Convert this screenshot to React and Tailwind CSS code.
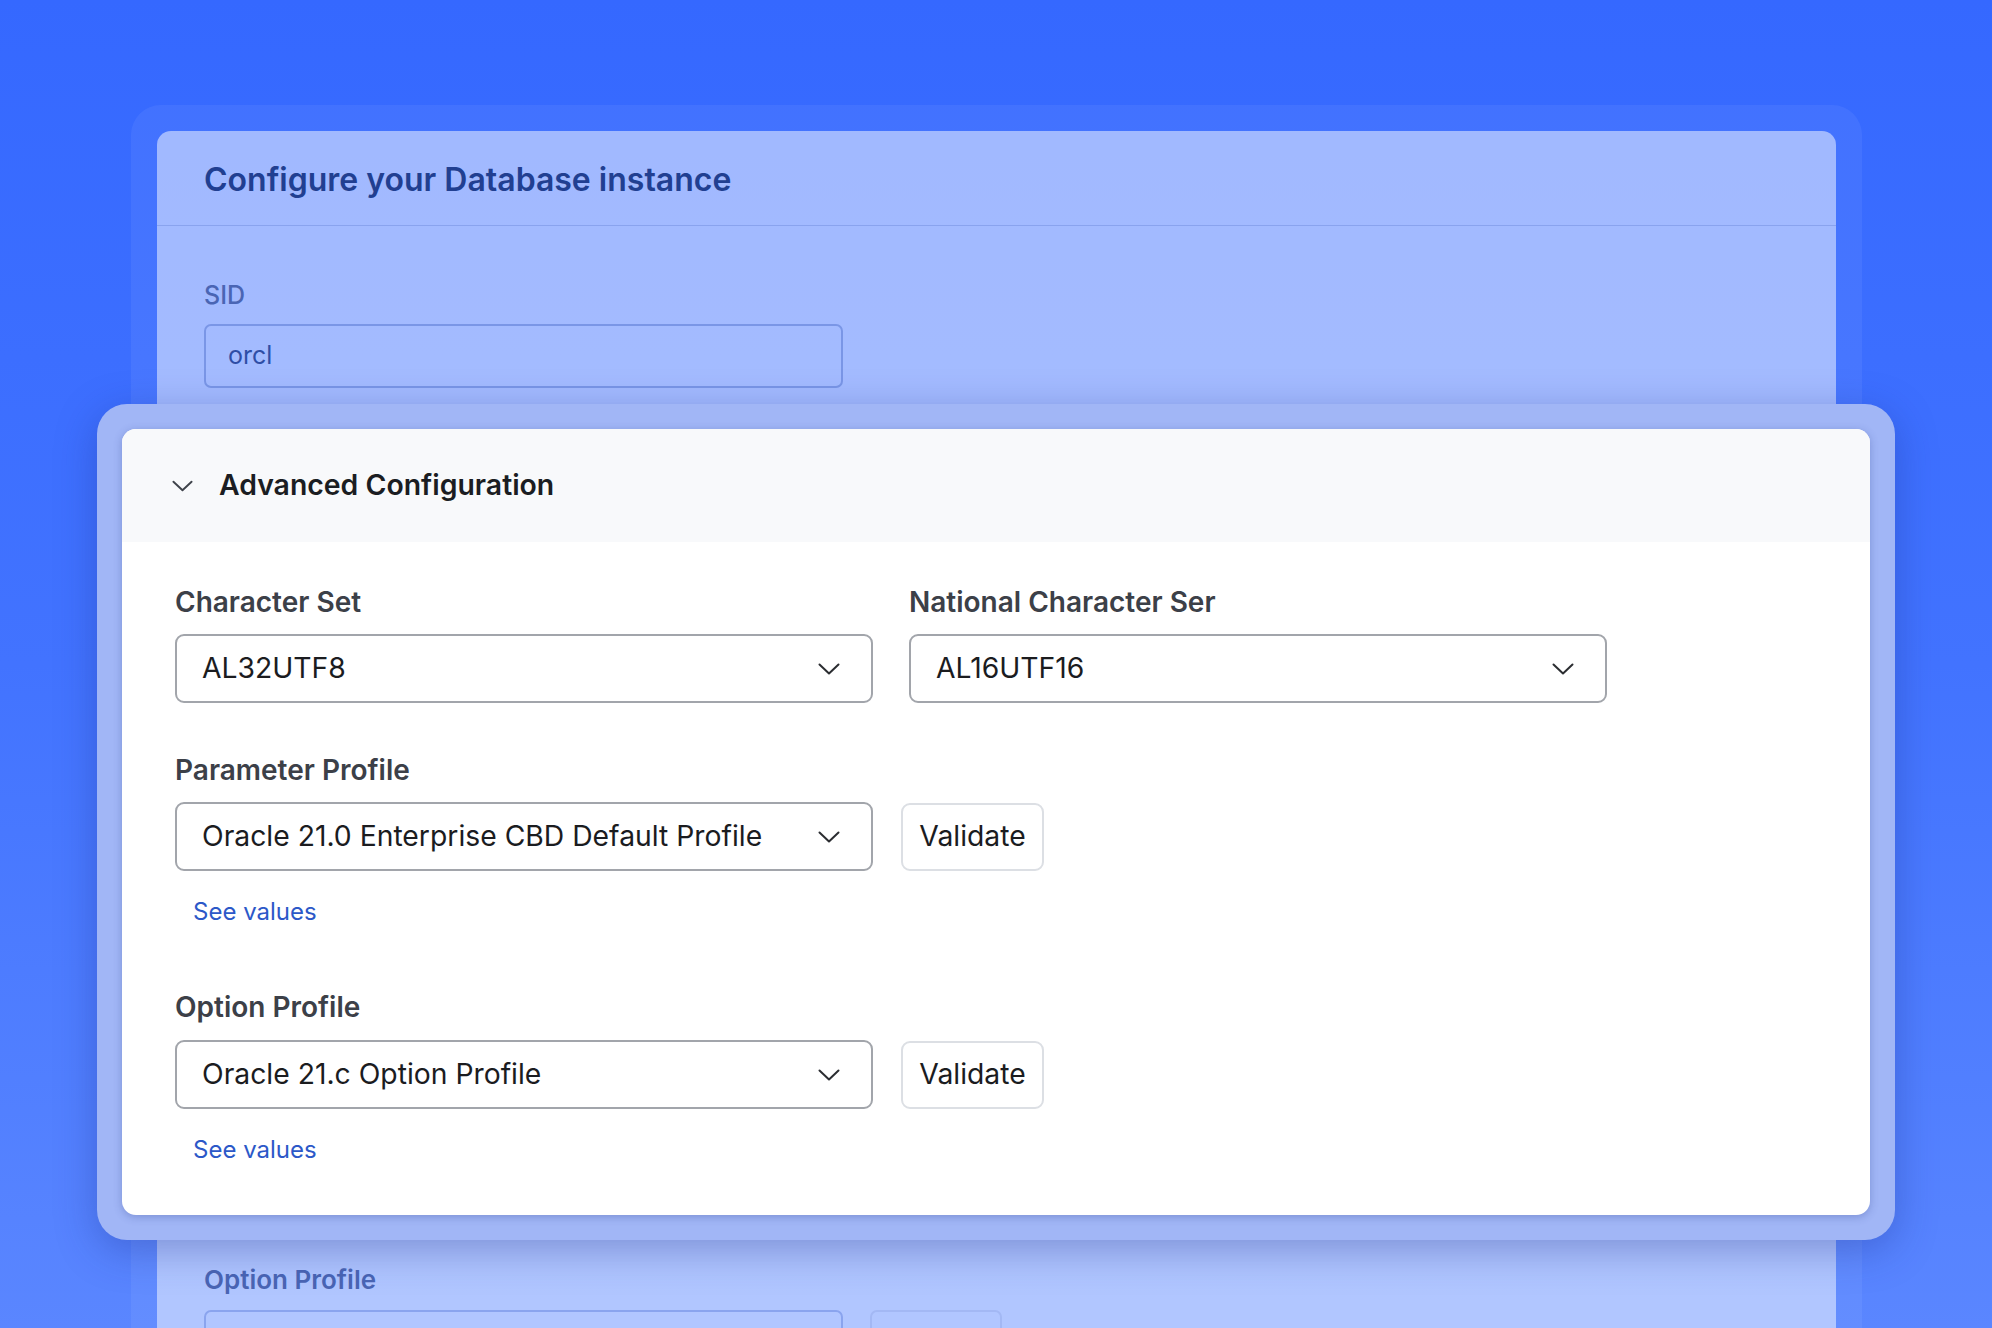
import React from "react";

const Chevron = ({ className }) => (
  <svg className={className} viewBox="0 0 22 12" fill="none" stroke="currentColor" strokeWidth="2" strokeLinecap="round" strokeLinejoin="round">
    <path d="M1.5 1.5 11 10.5 20.5 1.5" />
  </svg>
);

const Select = ({ value }) => (
  <div className="w-[698px] h-[69px] flex items-center justify-between pl-[25px] pr-[31px] border-2 border-[#a2a5ab] rounded-[9px] bg-white">
    <span className="text-[28.3px] text-[#1b1c1f]">{value}</span>
    <Chevron className="w-[22px] h-[12px] text-[#2b2d31]" />
  </div>
);

const ValidateButton = () => (
  <button className="w-[143px] h-[68px] border-2 border-[#dcdfe4] rounded-[9px] bg-white text-[28.3px] text-[#1b1c1f]">
    Validate
  </button>
);

const Label = ({ children }) => (
  <div className="text-[28px] leading-[32px] font-semibold text-[#3c4048]">{children}</div>
);

const SeeValues = () => (
  <div className="pl-[18px] mt-[25px] text-[24px] leading-[32px] text-[#2c58c8]">See values</div>
);

export default function App() {
  return (
    <div
      className="relative w-full h-[1328px] overflow-hidden bg-gradient-to-b from-[#3568ff] via-[#4273ff] to-[#5a86ff]"
      style={{ fontFamily: "Inter, 'Noto Sans', sans-serif" }}
    >
      {/* back panel */}
      <div className="ml-[131px] mt-[105px] w-[1731px] h-[1300px] px-[26px] pt-[26px] rounded-t-[30px] bg-white/[0.06]">
        <div className="h-full rounded-t-[14px] bg-white/50">
          <div className="h-[95px] px-[47px] pt-[4px] flex items-center border-b border-[#89a3ee]">
            <h1 className="text-[32px] font-semibold text-[#213f91]">Configure your Database instance</h1>
          </div>
          <div className="px-[47px] pt-[53px]">
            <div className="text-[25px] leading-[32px] font-medium text-[#4a65b4]">SID</div>
            <div className="mt-[13px] w-[639px] h-[64px] flex items-center px-[22px] border-2 border-[#7a96e6] rounded-[7px]">
              <span className="text-[25px] text-[#2f4ea6]">orcl</span>
            </div>
            <div className="h-[876px]" />
            <div className="text-[26px] leading-[32px] font-semibold text-[#4a65b4]">Option Profile</div>
            <div className="mt-[14px] flex gap-[27px]">
              <div className="w-[639px] h-[63px] border-2 border-[#8aa4ee] rounded-[7px]" />
              <div className="w-[132px] h-[63px] border-2 border-[#a3b8f4] rounded-[7px]" />
            </div>
          </div>
        </div>
      </div>

      {/* front card overlay */}
      <div className="absolute left-[97px] top-[404px] w-[1798px] h-[836px] p-[25px] rounded-[30px] bg-[#a1b6f6] shadow-[0_10px_40px_rgba(25,45,140,0.35)]">
        <div className="h-full rounded-[14px] overflow-hidden bg-white shadow-[0_2px_8px_rgba(40,60,140,0.3)]">
          <div className="h-[113px] bg-[#f8f9fb] flex items-center pl-[50px]">
            <Chevron className="w-[21px] h-[12px] text-[#3f434b]" />
            <span className="ml-[26px] text-[28.4px] font-semibold text-[#1b1d22]">Advanced Configuration</span>
          </div>
          <div className="pl-[53px] pt-[44px]">
            <div className="flex gap-[36px]">
              <div>
                <Label>Character Set</Label>
                <div className="mt-[16px]">
                  <Select value="AL32UTF8" />
                </div>
              </div>
              <div>
                <Label>National Character Ser</Label>
                <div className="mt-[16px]">
                  <Select value="AL16UTF16" />
                </div>
              </div>
            </div>

            <div className="mt-[51px]">
              <Label>Parameter Profile</Label>
              <div className="mt-[16px] flex items-center gap-[28px]">
                <Select value="Oracle 21.0 Enterprise CBD Default Profile" />
                <ValidateButton />
              </div>
              <SeeValues />
            </div>

            <div className="mt-[63px]">
              <Label>Option Profile</Label>
              <div className="mt-[17px] flex items-center gap-[28px]">
                <Select value="Oracle 21.c Option Profile" />
                <ValidateButton />
              </div>
              <SeeValues />
            </div>
          </div>
        </div>
      </div>
    </div>
  );
}
